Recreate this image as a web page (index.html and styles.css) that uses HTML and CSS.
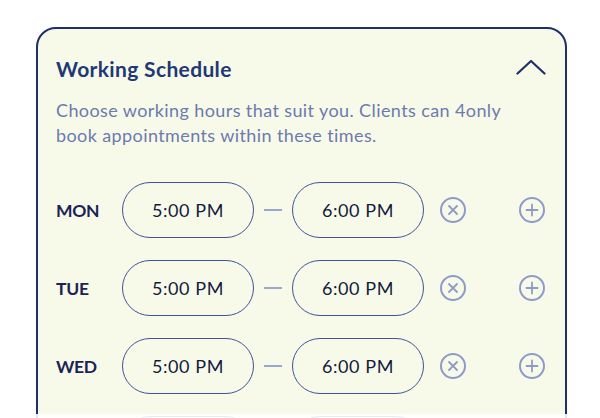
FILE: index.html
```html
<!DOCTYPE html>
<html>
<head>
<meta charset="utf-8">
<link rel="stylesheet" href="styles.css">
</head>
<body>
<div class="card">
  <div class="header">
    <h2 class="title">Working Schedule</h2>
    <svg class="chevron" width="30" height="16" viewBox="0 0 30 16"><path d="M1.5 14.5 L15 2 L28.5 14.5" fill="none" stroke="#1f2f6a" stroke-width="2.2" stroke-linecap="round" stroke-linejoin="round"/></svg>
  </div>
  <p class="desc">Choose working hours that suit you. Clients can 4only book appointments within these times.</p>
  <div class="rows">
    <div class="row">
      <span class="day">MON</span>
      <span class="pill">5:00 PM</span>
      <span class="dash"></span>
      <span class="pill">6:00 PM</span>
      <svg class="icon remove" width="26" height="26" viewBox="0 0 26 26"><circle cx="13" cy="13" r="12" fill="none" stroke="#8e9bc9" stroke-width="2"/><path d="M9 9 L17 17 M17 9 L9 17" stroke="#8e9bc9" stroke-width="1.8" stroke-linecap="round"/></svg>
      <svg class="icon add" width="26" height="26" viewBox="0 0 26 26"><circle cx="13" cy="13" r="12" fill="none" stroke="#8e9bc9" stroke-width="2"/><path d="M13 7.5 V18.5 M7.5 13 H18.5" stroke="#8e9bc9" stroke-width="1.8" stroke-linecap="round"/></svg>
    </div>
    <div class="row">
      <span class="day">TUE</span>
      <span class="pill">5:00 PM</span>
      <span class="dash"></span>
      <span class="pill">6:00 PM</span>
      <svg class="icon remove" width="26" height="26" viewBox="0 0 26 26"><circle cx="13" cy="13" r="12" fill="none" stroke="#8e9bc9" stroke-width="2"/><path d="M9 9 L17 17 M17 9 L9 17" stroke="#8e9bc9" stroke-width="1.8" stroke-linecap="round"/></svg>
      <svg class="icon add" width="26" height="26" viewBox="0 0 26 26"><circle cx="13" cy="13" r="12" fill="none" stroke="#8e9bc9" stroke-width="2"/><path d="M13 7.5 V18.5 M7.5 13 H18.5" stroke="#8e9bc9" stroke-width="1.8" stroke-linecap="round"/></svg>
    </div>
    <div class="row">
      <span class="day">WED</span>
      <span class="pill">5:00 PM</span>
      <span class="dash"></span>
      <span class="pill">6:00 PM</span>
      <svg class="icon remove" width="26" height="26" viewBox="0 0 26 26"><circle cx="13" cy="13" r="12" fill="none" stroke="#8e9bc9" stroke-width="2"/><path d="M9 9 L17 17 M17 9 L9 17" stroke="#8e9bc9" stroke-width="1.8" stroke-linecap="round"/></svg>
      <svg class="icon add" width="26" height="26" viewBox="0 0 26 26"><circle cx="13" cy="13" r="12" fill="none" stroke="#8e9bc9" stroke-width="2"/><path d="M13 7.5 V18.5 M7.5 13 H18.5" stroke="#8e9bc9" stroke-width="1.8" stroke-linecap="round"/></svg>
    </div>
    <div class="row peek">
      <span class="day"></span>
      <span class="pill"></span>
      <span class="dash"></span>
      <span class="pill"></span>
    </div>
  </div>
</div>
<div class="fade"></div>
</body>
</html>
```

FILE: styles.css
```css
html, body {
  margin: 0;
  padding: 0;
  background: #ffffff;
  height: 418px;
  overflow: hidden;
}
body {
  position: relative;
  font-family: Lato, "Noto Sans", sans-serif;
}
.card {
  box-sizing: border-box;
  margin: 27px 0 0 36px;
  width: 531px;
  border: 2px solid #1f2f6a;
  border-radius: 20px;
  background: #f8fae9;
  padding: 26px 19px 40px 18px;
}
.header {
  display: flex;
  align-items: center;
  justify-content: space-between;
}
.title {
  margin: 0;
  font-size: 21px;
  font-weight: 700;
  letter-spacing: 0.35px;
  color: #1f3876;
  line-height: 28px;
}
.chevron {
  margin-top: -5px;
}
.desc {
  margin: 15px 0 0;
  font-size: 18px;
  line-height: 25px;
  letter-spacing: 0.4px;
  color: #6b7aaf;
  width: 480px;
}
.rows {
  margin-top: 34px;
  display: flex;
  flex-direction: column;
  gap: 22px;
}
.row {
  display: flex;
  align-items: center;
  height: 56px;
}
.day {
  width: 66px;
  font-size: 17.5px;
  font-weight: 700;
  letter-spacing: -0.3px;
  color: #1a2456;
}
.pill {
  box-sizing: border-box;
  width: 132px;
  height: 56px;
  border: 1.5px solid #3e5399;
  border-radius: 28px;
  display: flex;
  align-items: center;
  justify-content: center;
  font-size: 18px;
  letter-spacing: 0.6px;
  color: #121a3e;
}
.dash {
  width: 18px;
  height: 2px;
  background: #9aa7cf;
  margin: 0 10px;
}
.remove {
  margin-left: 16px;
}
.add {
  margin-left: 53px;
}
.fade {
  position: absolute;
  left: 0;
  right: 0;
  bottom: 0;
  height: 4px;
  background: rgba(255, 255, 255, 0.88);
}
```
